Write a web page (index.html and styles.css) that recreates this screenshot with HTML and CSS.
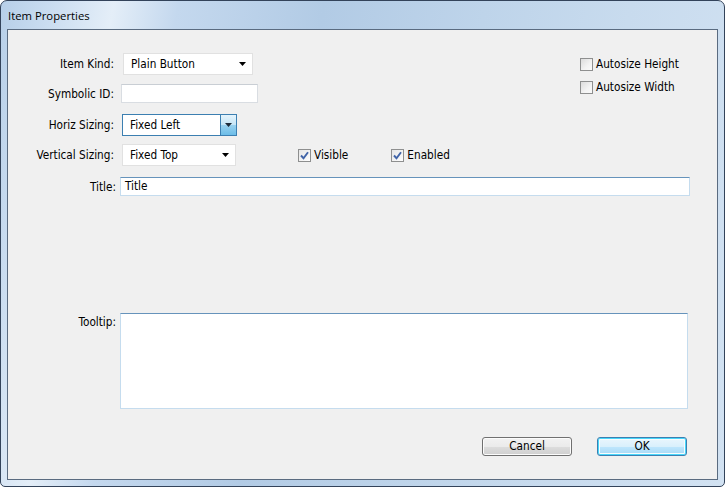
FILE: index.html
```html
<!DOCTYPE html>
<html>
<head>
<meta charset="utf-8">
<link rel="stylesheet" href="styles.css">
</head>
<body>
<div class="window">
  <div class="titlebar"><span class="title">Item Properties</span></div>
  <div class="client">
    <div class="top">
      <div class="form">
        <div class="row r-kind">
          <span class="lbl">Item Kind:</span>
          <div class="select sel-kind"><span class="sel-text">Plain Button</span><svg class="arrow" width="7" height="4" viewBox="0 0 7 4"><polygon points="0,0 7,0 3.5,4" fill="#000"/></svg></div>
        </div>
        <div class="row r-sym">
          <span class="lbl">Symbolic ID:</span>
          <div class="input inp-sym"></div>
        </div>
        <div class="row r-horiz">
          <span class="lbl">Horiz Sizing:</span>
          <div class="select sel-horiz focused"><span class="sel-text">Fixed Left</span><span class="dd-btn"><svg width="7" height="4" viewBox="0 0 7 4"><polygon points="0,0 7,0 3.5,4" fill="#1d2b3a"/></svg></span></div>
        </div>
        <div class="row r-vert">
          <span class="lbl">Vertical Sizing:</span>
          <div class="select sel-vert"><span class="sel-text">Fixed Top</span><svg class="arrow" width="7" height="4" viewBox="0 0 7 4"><polygon points="0,0 7,0 3.5,4" fill="#000"/></svg></div>
          <label class="check chk-visible"><span class="box checked"><svg width="11" height="11" viewBox="0 0 11 11"><path d="M2 5.5 L4.5 8.2 L9 2.2" fill="none" stroke="#4164a8" stroke-width="1.9"/></svg></span>Visible</label>
          <label class="check chk-enabled"><span class="box checked"><svg width="11" height="11" viewBox="0 0 11 11"><path d="M2 5.5 L4.5 8.2 L9 2.2" fill="none" stroke="#4164a8" stroke-width="1.9"/></svg></span>Enabled</label>
        </div>
      </div>
      <div class="autosize">
        <label class="check"><span class="box"></span>Autosize Height</label>
        <label class="check"><span class="box"></span>Autosize Width</label>
      </div>
    </div>
    <div class="row r-title">
      <span class="lbl lbl-wide">Title:</span>
      <div class="input field inp-title">Title</div>
    </div>
    <div class="row r-tooltip">
      <span class="lbl lbl-wide lbl-top">Tooltip:</span>
      <div class="input field inp-tooltip"></div>
    </div>
    <div class="buttons">
      <div class="btn">Cancel</div>
      <div class="btn btn-default">OK</div>
    </div>
  </div>
</div>
</body>
</html>
```

FILE: styles.css
```css
* { box-sizing: border-box; }
html, body { margin: 0; padding: 0; background: #ffffff; }
body { width: 725px; height: 487px; overflow: hidden; }

.window {
  width: 725px;
  height: 487px;
  border: 1px solid #33435a;
  border-radius: 7px 7px 5px 5px;
  background: linear-gradient(100deg, #b7cfe8 0%, #c9dcf0 6%, #e4eef8 14%, #c4d8ee 22%, #b2cbe5 40%, #bed4ea 60%, #c8dbee 78%, #d2e2f2 100%);
  padding: 0 6px 6px 6px;
  display: flex;
  flex-direction: column;
  font-family: "DejaVu Sans Condensed", "DejaVu Sans", sans-serif;
  font-size: 11.7px;
  color: #000;
}

.titlebar {
  height: 28px;
  display: flex;
  align-items: center;
  padding: 1px 0 0 1px;
}
.title {
  font-family: "Open Sans", "Liberation Sans", sans-serif;
  font-size: 11.3px;
  color: #000;
}

.client {
  flex: 1;
  border: 1px solid #5a6b80;
  background: #f0f0f0;
  padding-top: 23px;
  display: flex;
  flex-direction: column;
}

.top { display: flex; }
.form { display: flex; flex-direction: column; }

.row { display: flex; align-items: center; }
.lbl { width: 106px; text-align: right; flex: none; white-space: nowrap; }
.lbl-wide { width: 108px; }
.lbl-top { align-self: flex-start; padding-top: 2px; }

.r-kind { height: 22px; }
.r-sym { height: 19px; margin-top: 9px; }
.r-horiz { height: 22px; margin-top: 11px; }
.r-vert { height: 22px; margin-top: 8px; }
.r-title { height: 19px; margin-top: 11px; }
.r-tooltip { height: 96px; margin-top: 117px; align-items: stretch; }

.select {
  height: 22px;
  background: #fff;
  border: 1px solid #e1e1e1;
  display: flex;
  align-items: center;
  position: relative;
  flex: none;
}
.sel-text { padding-left: 7px; flex: 1; white-space: nowrap; }
.arrow { margin-right: 6px; flex: none; }
.sel-kind { width: 130px; margin-left: 9px; }
.sel-horiz { width: 115px; margin-left: 8px; }
.sel-vert { width: 114px; margin-left: 8px; }
.focused { border-color: #3c7fb1; }
.dd-btn {
  width: 16px;
  align-self: stretch;
  border-left: 1px solid #3c7fb1;
  background: linear-gradient(#e5f4fc 0%, #c4e5f6 50%, #98d1ef 51%, #6cbde8 100%);
  display: flex;
  align-items: center;
  justify-content: center;
}

.input {
  background: #fff;
  border: 1px solid #d9dde2;
  border-top-color: #c9ced4;
  flex: none;
}
.inp-sym { width: 137px; height: 19px; margin-left: 7px; }
.field {
  border: 1px solid #c5dcee;
  border-top-color: #6693bb;
  padding-left: 4px;
  line-height: 17px;
}
.inp-title { width: 570px; height: 19px; margin-left: 4px; }
.inp-tooltip { width: 568px; margin-left: 4px; }

.check {
  display: flex;
  align-items: center;
  white-space: nowrap;
}
.box {
  width: 13px;
  height: 13px;
  border: 1px solid #8e8f8f;
  background: linear-gradient(135deg, #dcdcdc 0%, #f3f3f3 60%, #fafafa 100%);
  margin-right: 3px;
  display: flex;
  align-items: center;
  justify-content: center;
  flex: none;
}
.box.checked { background: linear-gradient(135deg, #e6e6e6 0%, #f6f6f6 70%, #ffffff 100%); }
.chk-visible { margin-left: 62px; }
.chk-enabled { margin-left: 43px; }

.autosize {
  margin-left: auto;
  width: 137px;
  padding-top: 4px;
  display: flex;
  flex-direction: column;
  gap: 9px;
}
.autosize .check { height: 14px; }

.buttons {
  margin-top: 28px;
  display: flex;
  justify-content: flex-end;
  gap: 25px;
  padding-right: 30px;
}
.btn {
  width: 90px;
  height: 19px;
  border: 1px solid #707070;
  border-radius: 3px;
  background: linear-gradient(#f2f2f2 0%, #ebebeb 50%, #dddddd 51%, #cfcfcf 100%);
  box-shadow: inset 0 0 0 1px #fcfcfc;
  text-align: center;
  line-height: 17px;
}
.btn-default {
  border-color: #3c7fb1;
  box-shadow: inset 0 0 0 1px #48d7fb, inset 0 0 0 2px #f8fbfd;
  background: linear-gradient(#eaf6fd 0%, #d9f0fc 50%, #bee6fd 51%, #a7d9f5 100%);
}
```
